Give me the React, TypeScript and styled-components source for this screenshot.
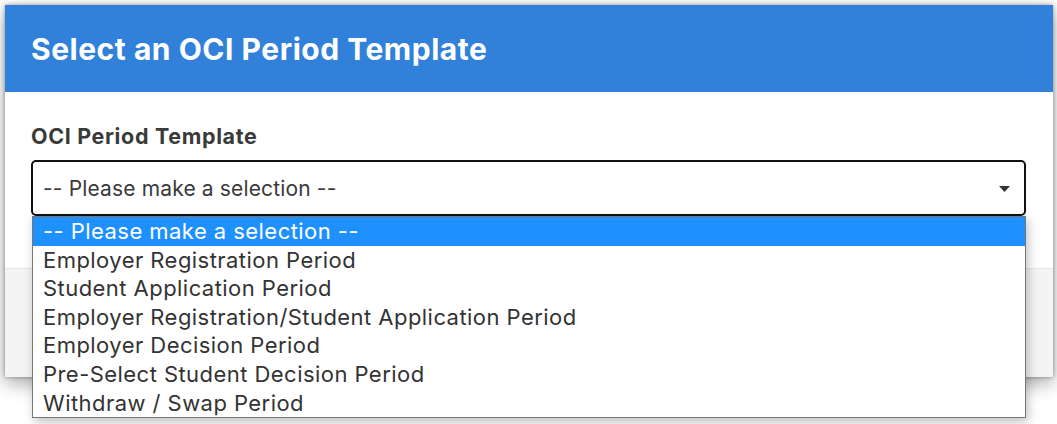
import React from "react";
import styled, { createGlobalStyle } from "styled-components";

const Global = createGlobalStyle`
  html, body { margin: 0; padding: 0; background: #ffffff; }
  body { font-family: Inter, "Liberation Sans", Arial, sans-serif; }
  * { box-sizing: border-box; }
`;

const Page = styled.div`
  position: relative;
  width: 1057px;
  height: 424px;
  overflow: hidden;
  padding: 5px 4px 0 5px;
`;

const Modal = styled.div`
  width: 1048px;
  background: #ffffff;
  box-shadow: 0 0 4px rgba(0, 0, 0, 0.35), 0 6px 18px rgba(0, 0, 0, 0.35);
  display: flex;
  flex-direction: column;
`;

const Header = styled.div`
  height: 87px;
  background: #3181db;
  display: flex;
  align-items: center;
  padding: 0 26px 0;
`;

const Title = styled.h1`
  margin: 0;
  color: #ffffff;
  font-size: 30px;
  font-weight: 700;
  letter-spacing: 0.52px;
`;

const Body = styled.div`
  height: 176px;
  padding: 30px 26px 0;
  display: flex;
  flex-direction: column;
`;

const Label = styled.label`
  font-size: 21.5px;
  font-weight: 700;
  color: #3a3a3a;
  line-height: 28px;
  letter-spacing: 0.65px;
  margin-bottom: 10px;
`;

const SelectBox = styled.div`
  height: 56px;
  width: 995px;
  border: 2.5px solid #111111;
  border-radius: 5px;
  display: flex;
  align-items: center;
  justify-content: space-between;
  padding: 1px 14px 0 10px;
  font-size: 21px;
  letter-spacing: 0.15px;
  color: #3a3a3a;
`;

const Footer = styled.div`
  height: 109px;
  background: #f4f4f4;
  border-top: 1px solid #e6e6e6;
`;

const Menu = styled.ul`
  position: absolute;
  top: 216px;
  left: 32px;
  width: 994px;
  margin: 0;
  padding: 0;
  list-style: none;
  background: #ffffff;
  border: 1px solid #767676;
  box-shadow: 2px 4px 10px rgba(0, 0, 0, 0.25);
`;

const Option = styled.li<{ $active?: boolean }>`
  height: 28.6px;
  line-height: 29px;
  padding: 0 10px;
  font-size: 22px;
  letter-spacing: 0.45px;
  color: ${(p) => (p.$active ? "#ffffff" : "#333333")};
  background: ${(p) => (p.$active ? "#1e90ff" : "transparent")};
  white-space: nowrap;
`;

const options = [
  "-- Please make a selection --",
  "Employer Registration Period",
  "Student Application Period",
  "Employer Registration/Student Application Period",
  "Employer Decision Period",
  "Pre-Select Student Decision Period",
  "Withdraw / Swap Period",
];

export default function App() {
  return (
    <Page>
      <Global />
      <Modal>
        <Header>
          <Title>Select an OCI Period Template</Title>
        </Header>
        <Body>
          <Label>OCI Period Template</Label>
          <SelectBox>
            <span>-- Please make a selection --</span>
            <svg width="11" height="6" viewBox="0 0 11 6">
              <path d="M0 0 L11 0 L5.5 6 Z" fill="#333" />
            </svg>
          </SelectBox>
        </Body>
        <Footer />
      </Modal>
      <Menu>
        {options.map((o, i) => (
          <Option key={o} $active={i === 0}>
            {o}
          </Option>
        ))}
      </Menu>
    </Page>
  );
}
